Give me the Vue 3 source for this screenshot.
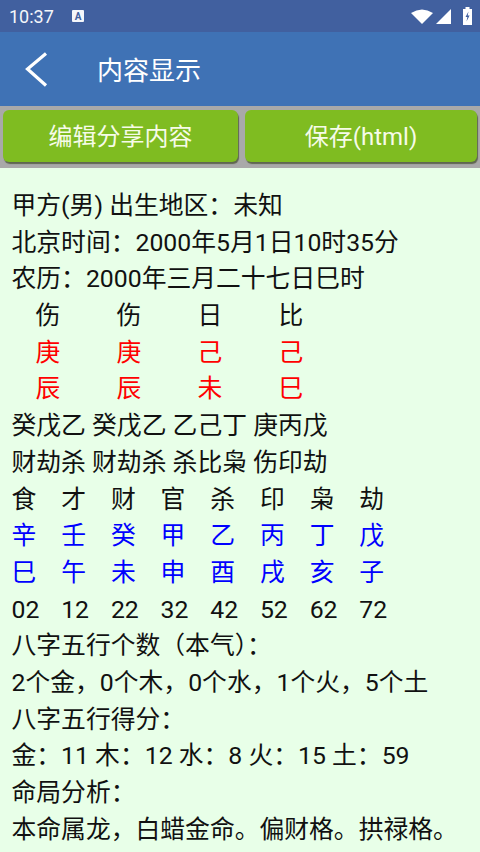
<script setup>
const cjk = [
  { text: '甲方(男) 出生地区：未知' },
  { text: '北京时间：2000年5月1日10时35分' },
  { text: '农历：2000年三月二十七日巳时' },
];
const pillars = [
  { color: '', cells: ['伤', '伤', '日', '比'] },
  { color: 'red', cells: ['庚', '庚', '己', '己'] },
  { color: 'red', cells: ['辰', '辰', '未', '巳'] },
];
const hidden = ['癸戊乙 癸戊乙 乙己丁 庚丙戊', '财劫杀 财劫杀 杀比枭 伤印劫'];
const luck = [
  { color: '', cells: ['食', '才', '财', '官', '杀', '印', '枭', '劫'] },
  { color: 'blue', cells: ['辛', '壬', '癸', '甲', '乙', '丙', '丁', '戊'] },
  { color: 'blue', cells: ['巳', '午', '未', '申', '酉', '戌', '亥', '子'] },
  { color: '', cells: ['02', '12', '22', '32', '42', '52', '62', '72'] },
];
const tail = [
  '八字五行个数（本气）：',
  '2个金，0个木，0个水，1个火，5个土',
  '八字五行得分：',
  '金：11 木：12 水：8 火：15 土：59',
  '命局分析：',
  '本命属龙，白蜡金命。偏财格。拱禄格。',
];
</script>

<template>
  <div class="screen">
    <div class="status">
      <div class="status-left">
        <span class="time">10:37</span>
        <svg class="a-icon" width="14" height="14" viewBox="0 0 14 14">
          <rect x="1" y="1" width="12" height="12" rx="1" fill="#f4f6fa" />
          <text x="7" y="10.5" text-anchor="middle" class="a-letter">A</text>
        </svg>
      </div>
      <div class="status-right">
        <svg width="24" height="18" viewBox="0 0 24 18">
          <path d="M1 6 Q12 -1 23 6 L12 17 Z" fill="#fff" />
        </svg>
        <svg width="17" height="18" viewBox="0 0 17 18">
          <path d="M16 2 V17 H1 Z" fill="#fff" />
        </svg>
        <svg class="battery" width="11" height="20" viewBox="0 0 11 20">
          <path d="M3.5 1 H7.5 V3 H10 V19 H1 V3 H3.5 Z" fill="#fff" />
          <path d="M6.5 5.5 L3.5 11 H5.4 L4.5 15.5 L7.6 9.5 H5.7 Z" fill="#41609f" />
        </svg>
      </div>
    </div>
    <header class="bar">
      <svg class="back" width="24" height="36" viewBox="0 0 24 36">
        <path d="M22 2.500 L3.500 18 L22 34.500" fill="none" stroke="#fff" stroke-width="3.200" />
      </svg>
      <h1 class="title">内容显示</h1>
    </header>
    <div class="actions">
      <button class="btn btn-edit">编辑分享内容</button>
      <button class="btn">保存(html)</button>
    </div>
    <main class="content">
      <p v-for="l in cjk" :key="l.text" class="line">{{ l.text }}</p>
      <div v-for="(r, i) in pillars" :key="'p' + i" class="grid four" :class="r.color">
        <span v-for="(c, j) in r.cells" :key="j" class="cell">{{ c }}</span>
      </div>
      <p v-for="l in hidden" :key="l" class="line">{{ l }}</p>
      <div v-for="(r, i) in luck" :key="'l' + i" class="grid eight" :class="r.color">
        <span v-for="(c, j) in r.cells" :key="j" class="cell">{{ c }}</span>
      </div>
      <p v-for="l in tail" :key="l" class="line">{{ l }}</p>
    </main>
  </div>
</template>

<style>
html, body { margin: 0; background: #e8ffe8; }
</style>

<style scoped>
.screen {
  width: 480px;
  height: 852px;
  overflow: hidden;
  background: #e8ffe8;
  font-family: Roboto, "Noto Sans CJK SC", sans-serif;
  color: #111;
}
.status {
  height: 32px;
  background: #41609f;
  display: flex;
  align-items: center;
  justify-content: space-between;
  padding: 0 7px 0 9px;
  box-sizing: border-box;
}
.status-left { display: flex; align-items: center; gap: 17px; }
.status-right { display: flex; align-items: center; gap: 1px; }
.battery { margin-left: 9px; }
.time { font-size: 18px; color: #f4f6fa; }
.a-letter { font: bold 10px Roboto, sans-serif; fill: #41609f; }
.bar {
  height: 74px;
  background: #3f72b5;
  display: flex;
  align-items: center;
  padding-left: 24px;
  box-sizing: border-box;
}
.back { flex: none; }
.title {
  margin: 0 0 2px 49px;
  font-size: 26px;
  font-weight: 400;
  color: #fff;
}
.actions {
  height: 62px;
  background: #a9a9a9;
  display: flex;
  gap: 7px;
  padding: 4px 3px 6px 3px;
  box-sizing: border-box;
}
.btn {
  flex: 1;
  border: 0;
  border-radius: 6px;
  background: #7fbc21;
  color: #f6fbe8;
  font-family: inherit;
  font-size: 24px;
  padding: 0 0 3px;
  box-shadow: 1px 2px 1px #5f6650;
}
.btn-edit { flex: 0 0 235px; }
.content { padding: 20px 0 0 11.500px; }
.line {
  margin: 0;
  height: 36.700px;
  line-height: 36.700px;
  font-size: 24.800px;
  white-space: nowrap;
}
.grid {
  display: grid;
  height: 36.700px;
  line-height: 36.700px;
  font-size: 24.800px;
}
.four { grid-template-columns: repeat(4, 81px); padding-left: 24px; }
.eight { grid-template-columns: repeat(8, 49.700px); }
.cell { white-space: nowrap; }
.red { color: #ff0000; }
.blue { color: #0000ff; }
</style>
